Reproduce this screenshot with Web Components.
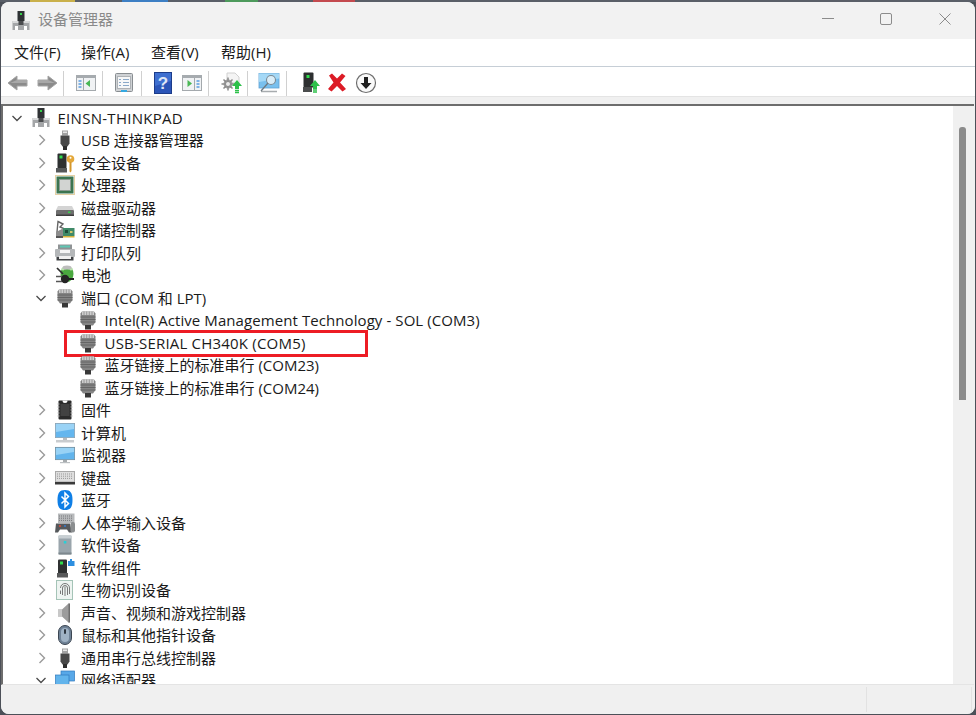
<!DOCTYPE html>
<html lang="zh-CN">
<head>
<meta charset="utf-8">
<title>设备管理器</title>
<style>
    html, body {
        margin: 0;
        height: 715px;
        overflow: hidden;
    }
    body {
        background:
            linear-gradient(90deg, #5a5f68 30px, #c9b04a 30px, #c9b04a 75px, #5a5f68 75px, #5a5f68 122px, #3d7fc4 122px, #3d7fc4 168px, #5a5f68 168px, #5a5f68 225px, #4d9a5c 225px, #4d9a5c 258px, #5a5f68 258px, #5a5f68 313px, #c44a4f 313px, #c44a4f 355px, #5a5f68 355px) 0 0 / 100% 2px no-repeat,
            #4c5058;
        font: 15px/22.5px "Open Sans", "Noto Sans CJK SC", sans-serif;
        color: #1a1a1a;
    }
</style>
</head>
<body>
<device-window>
    <title-bar slot="top" label="设备管理器"></title-bar>
    <menu-bar slot="top"></menu-bar>
    <tool-bar slot="top"></tool-bar>

    <device-tree>
        <tree-row level="0" icon="computer" state="open" style="letter-spacing:.28px">EINSN-THINKPAD</tree-row>
        <tree-row level="1" icon="usb" state="closed">USB 连接器管理器</tree-row>
        <tree-row level="1" icon="security" state="closed">安全设备</tree-row>
        <tree-row level="1" icon="cpu" state="closed">处理器</tree-row>
        <tree-row level="1" icon="disk" state="closed">磁盘驱动器</tree-row>
        <tree-row level="1" icon="storage" state="closed">存储控制器</tree-row>
        <tree-row level="1" icon="printer" state="closed">打印队列</tree-row>
        <tree-row level="1" icon="battery" state="closed">电池</tree-row>
        <tree-row level="1" icon="port" state="open">端口 (COM 和 LPT)</tree-row>
        <tree-row level="2" icon="port" style="letter-spacing:.08px">Intel(R) Active Management Technology - SOL (COM3)</tree-row>
        <tree-row level="2" icon="port" marked style="letter-spacing:.2px">USB-SERIAL CH340K (COM5)</tree-row>
        <tree-row level="2" icon="port">蓝牙链接上的标准串行 (COM23)</tree-row>
        <tree-row level="2" icon="port">蓝牙链接上的标准串行 (COM24)</tree-row>
        <tree-row level="1" icon="firmware" state="closed">固件</tree-row>
        <tree-row level="1" icon="desktop" state="closed">计算机</tree-row>
        <tree-row level="1" icon="monitor" state="closed">监视器</tree-row>
        <tree-row level="1" icon="keyboard" state="closed">键盘</tree-row>
        <tree-row level="1" icon="bluetooth" state="closed">蓝牙</tree-row>
        <tree-row level="1" icon="hid" state="closed">人体学输入设备</tree-row>
        <tree-row level="1" icon="softdev" state="closed">软件设备</tree-row>
        <tree-row level="1" icon="softcomp" state="closed">软件组件</tree-row>
        <tree-row level="1" icon="bio" state="closed">生物识别设备</tree-row>
        <tree-row level="1" icon="sound" state="closed">声音、视频和游戏控制器</tree-row>
        <tree-row level="1" icon="mouse" state="closed">鼠标和其他指针设备</tree-row>
        <tree-row level="1" icon="usb" state="closed">通用串行总线控制器</tree-row>
        <tree-row level="1" icon="network" state="open">网络适配器</tree-row>
    </device-tree>

    <status-bar slot="bottom"></status-bar>
</device-window>

<script>
const ICONS = {
    computer: `<rect x="6.500" y="0" width="7" height="10" fill="#2f3234"/><rect x="9" y="2" width="2" height="2" fill="#35d04a"/><path d="M1.500 10h17v9h-17z" fill="#a4a6a8"/><path d="M1.500 10h17v2h-17z" fill="#d8d9da"/><rect x="4" y="15" width="3" height="4" fill="#fff"/><rect x="13" y="15" width="3" height="4" fill="#fff"/><rect x="7.500" y="10" width="5" height="4" fill="#4a4c4e"/>`,
    usb: `<rect x="7" y="0.500" width="6" height="5" fill="#a2a2a2"/><rect x="8" y="1.500" width="4" height="1.500" fill="#e6e6e6"/><path d="M5.500 5.500h9v8l-2 3h-5l-2-3z" fill="#484848"/><rect x="8" y="16" width="4" height="4" fill="#2e2e2e"/>`,
    security: `<rect x="2.500" y="0.500" width="9" height="15" rx="1" fill="#2d2f30"/><rect x="4.500" y="2.500" width="3" height="3" fill="#2fdc4c"/><path d="M1 15h11v4.500H1z" fill="#565859"/><circle cx="15.500" cy="6" r="3.800" fill="#e4a83a"/><circle cx="15.500" cy="4.800" r="1" fill="#fff"/><path d="M14.500 9h2v9l-1 1.500-1-1z" fill="#d4972c"/>`,
    cpu: `<rect x="0.500" y="0.500" width="19" height="19" fill="none" stroke="#c8a24a" stroke-dasharray="1 1"/><rect x="1.500" y="1.500" width="17" height="17" fill="#3b7550"/><rect x="4.500" y="4.500" width="11" height="11" fill="#d2d4d2" stroke="#8a9a90"/>`,
    disk: `<path d="M3 8h14l2 4H1z" fill="#d4d4d4"/><rect x="1" y="12" width="18" height="5.500" rx="1" fill="#6e6e6e"/><rect x="1" y="16.500" width="18" height="1.500" fill="#3e3e3e"/><rect x="13" y="13.500" width="2.500" height="1.500" fill="#37d24c"/>`,
    storage: `<path d="M3 1.500l5 2.500-3 3 5 2-6 3H2z" fill="none" stroke="#666" stroke-width="1.400"/><path d="M1 12l6-3 3 3v4H1z" fill="#8c8c8c"/><rect x="8" y="8" width="11.500" height="8" fill="#3f8a68"/><rect x="10" y="10" width="3" height="3" fill="#1c4d3a"/><rect x="15" y="11" width="2.500" height="2" fill="#d8c86c"/><rect x="8" y="16" width="11.500" height="1.500" fill="#d6b13d"/><rect x="1" y="16" width="7" height="2" fill="#555"/>`,
    printer: `<rect x="3" y="1.500" width="14" height="5" fill="#8f9395"/><rect x="5" y="2.500" width="10" height="2" fill="#5fc7b4"/><rect x="0" y="6" width="20" height="8" rx="1" fill="#b4b7b9"/><rect x="5" y="7" width="10" height="3" fill="#f4f4f4"/><rect x="1.500" y="14" width="17" height="3.500" fill="#3f4244"/><rect x="4" y="13" width="12" height="3" fill="#f0f0f0"/>`,
    battery: `<ellipse cx="12" cy="9" rx="6.500" ry="8" fill="#4aa83f"/><path d="M7 5c2-3 8-3 10 0" fill="none" stroke="#b7e0ac" stroke-width="2.500"/><ellipse cx="12" cy="2.500" rx="4.500" ry="2" fill="#bdbdbd"/><path d="M2 3l6 6" stroke="#2f2f2f" stroke-width="1.700"/><circle cx="10" cy="14" r="4.200" fill="#242424"/><path d="M1 11.500h6M1 16.500h6" stroke="#555" stroke-width="1.700"/><path d="M13 14h6" stroke="#222" stroke-width="2"/>`,
    port: `<path d="M4 1.500h12l1.500 2V12l-2.500 3.500H5L2.500 12V3.500z" fill="#858585"/><rect x="4" y="1.500" width="12" height="3.500" fill="#cfcfcf"/><path d="M6 1.500V5M8.700 1.500V5M11.300 1.500V5M14 1.500V5" stroke="#8c8c8c" stroke-width=".8"/><path d="M2.500 7h15M2.500 9.500h15M2.500 12h15" stroke="#656565"/><rect x="7" y="15" width="6" height="4.500" fill="#383838"/>`,
    firmware: `<rect x="3.500" y="0.500" width="13" height="19" rx="1" fill="#2b2b2b"/><path d="M7.500 0.500a2.500 2.500 0 0 0 5 0z" fill="#fff"/><path d="M2.500 4h2M2.500 7h2M2.500 10h2M2.500 13h2M2.500 16h2M15.500 4h2M15.500 7h2M15.500 10h2M15.500 13h2M15.500 16h2" stroke="#b5b5b5"/><rect x="5.500" y="4" width="9" height="12" fill="#424242"/>`,
    desktop: `<rect x="0.300" y="0.300" width="19.400" height="14.400" fill="#64b6ee" stroke="#8a9aa4" stroke-width=".6"/><path d="M1 1h18v5L1 9z" fill="#9ad3f6"/><rect x="8" y="15" width="4" height="2" fill="#b8bcbf"/><rect x="1" y="17" width="18" height="2.500" fill="#c9cccf"/>`,
    monitor: `<rect x="0.300" y="2.300" width="19.400" height="12.400" fill="#62b4ec" stroke="#6f8796" stroke-width=".7"/><path d="M1 3h18v4L1 10z" fill="#98d2f5"/><rect x="8" y="15" width="4" height="2" fill="#a6abae"/><rect x="5" y="17" width="10" height="1.200" fill="#bcc0c3"/>`,
    keyboard: `<rect x="0.500" y="3.500" width="19" height="10.500" fill="#dedede" stroke="#a9a9a9"/><path d="M2 6h16M2 8.200h16M2 10.400h16" stroke="#999" stroke-dasharray="1 1"/><rect x="0" y="14" width="20" height="2.500" fill="#3a3a3a"/>`,
    bluetooth: `<path d="M10 0c5.500 0 7.500 3 7.500 10S15.500 20 10 20 2.500 17 2.500 10 4.500 0 10 0z" fill="#0f7fe6"/><path d="M6.500 6.500l7 7L10 17V3l3.500 3.500-7 7" fill="none" stroke="#fff" stroke-width="1.500"/>`,
    hid: `<rect x="3" y="0.500" width="16.500" height="9.500" fill="#b7b9bb"/><path d="M4 3h14M4 5.200h14M4 7.400h14" stroke="#77797b" stroke-dasharray="1 1"/><path d="M1 10.500h14l2 9h-3l-2-3H5l-2 3H0z" fill="#55585b"/><rect x="15.500" y="9" width="4.500" height="10.500" rx="2" fill="#8b8e90"/><circle cx="5" cy="13" r="1.100" fill="#d94b3d"/><circle cx="10" cy="13" r="1.100" fill="#3a79c9"/>`,
    softdev: `<rect x="3.500" y="0.500" width="13" height="19" rx="1" fill="#9aa5ac"/><rect x="3.500" y="0.500" width="13" height="3" fill="#c8cfd3"/><rect x="8.800" y="6" width="2.500" height="2.500" fill="#27d0d8"/><rect x="3.500" y="17.500" width="13" height="2" fill="#7d878d"/>`,
    softcomp: `<rect x="3" y="1.500" width="9" height="14" rx="1" fill="#2f3132"/><rect x="5" y="3.500" width="3" height="3" fill="#2fdc4c"/><path d="M2 15h11v4.500H2z" fill="#58595a"/><path d="M13 3h2V1h2v2h2.500v5H13z" fill="#2e8fe0"/>`,
    bio: `<rect x="1.500" y="0.500" width="16" height="19" fill="#eef4f1" stroke="#a5c4b7"/><path d="M5.500 8a4.500 4.500 0 0 1 9 0v6M7.500 15V8a2.500 2.500 0 0 1 5 0v7M10 6.500V16M5.500 10.500v3.500" fill="none" stroke="#6b6b6b" stroke-width=".9"/>`,
    sound: `<path d="M3 6.500h4l6.500-6h1v19h-1l-6.500-6H3z" fill="#9c9c9c"/><path d="M3 6.500h4v7H3z" fill="#c8c8c8"/><path d="M13.500 .5h1.500v19h-1.500z" fill="#6e6e6e"/>`,
    mouse: `<rect x="3.500" y="0.500" width="13" height="19" rx="6.500" fill="#6f8296" stroke="#3c4652"/><rect x="6" y="3" width="8" height="14" rx="4" fill="#9fb2c4"/><rect x="9" y="4" width="2" height="5" rx="1" fill="#2d3640"/>`,
    network: `<rect x="6" y="1" width="13.500" height="10" fill="#58a8e8" stroke="#2e78bd" stroke-width=".7"/><rect x="0.500" y="5" width="13.500" height="11" fill="#62b4ec" stroke="#2e78bd" stroke-width=".7"/><rect x="4" y="16" width="7" height="2" fill="#9aa0a4"/>`,

    back: `<path d="M1 11l9-7v4h10v6H10v4z" fill="#8b8b8b" stroke="#a4a4a4"/><path d="M10 8h10v3H3z" fill="#a8a8a8"/>`,
    forward: `<path d="M21 11l-9-7v4H2v6h10v4z" fill="#8b8b8b" stroke="#a4a4a4"/><path d="M12 8H2v3h17z" fill="#a8a8a8"/>`,
    panelLeft: `<rect x="1.500" y="3.500" width="19" height="15" fill="#f0f2f4" stroke="#a4a9ad"/><rect x="1" y="3" width="20" height="3" fill="#a6abaf"/><rect x="3.500" y="8" width="3" height="2" fill="#7fb2e6"/><rect x="3.500" y="11" width="3" height="2" fill="#7fb2e6"/><rect x="3.500" y="14" width="3" height="2" fill="#7fb2e6"/><path d="M8.500 6v13" stroke="#a4a9ad"/><path d="M15 8v7l-4.500-3.500z" fill="#49b755"/>`,
    panelRight: `<rect x="1.500" y="3.500" width="19" height="15" fill="#f0f2f4" stroke="#a4a9ad"/><rect x="1" y="3" width="20" height="3" fill="#a6abaf"/><rect x="15.500" y="8" width="3" height="2" fill="#7fb2e6"/><rect x="15.500" y="11" width="3" height="2" fill="#7fb2e6"/><rect x="15.500" y="14" width="3" height="2" fill="#7fb2e6"/><path d="M13.500 6v13" stroke="#a4a9ad"/><path d="M6.500 8v7l4.500-3.500z" fill="#49b755"/>`,
    props: `<rect x="2.500" y="1.500" width="17" height="18" rx="1" fill="#cfd2d5" stroke="#888d91"/><rect x="4.500" y="4.500" width="13" height="12" fill="#f6f7f8" stroke="#aeb2b6"/><path d="M6 7.500h2M10 7.500h6M6 10.500h2M10 10.500h6M6 13.500h2M10 13.500h6" stroke="#8aa8c8"/><rect x="8" y="18" width="6" height="2" fill="#35a8e0"/>`,
    help: `<rect x="2.500" y="0.500" width="17" height="21" fill="#2b55b8" stroke="#1c3c8a"/><path d="M3 1h16v8L3 14z" fill="#3e6fd0"/><text x="11" y="17" text-anchor="middle" font-family="Liberation Sans" font-size="17" font-weight="700" fill="#dfe6f6">?</text>`,
    scan: `<path d="M7 1h8l4 4v6H7z" fill="#f4f4f4" stroke="#d0d0d0"/><circle cx="8" cy="12" r="4.500" fill="#a0a0a0"/><path d="M8 5.500v13M1.500 12h13M3.500 7.500l9 9M12.500 7.500l-9 9" stroke="#8a8a8a" stroke-width="1.500"/><circle cx="8" cy="12" r="2" fill="#ececec"/><path d="M17 8l5 6h-3v3h-4v-3h-3z" fill="#2dc04a"/><path d="M15 18.500h4M15 20.500h4" stroke="#2dc04a" stroke-width="1.300"/>`,
    scanMonitor: `<rect x="1" y="1.500" width="20" height="14.500" fill="#79c0ee" stroke="#5fa2d4" stroke-width=".8"/><path d="M1 1.500h20v5L1 10z" fill="#a4d8f6"/><path d="M3 19.500h16" stroke="#a8acaf" stroke-width="1.500"/><circle cx="13" cy="8" r="4.500" fill="#d9edf8" stroke="#7c8a94" stroke-width="1.100"/><path d="M10 11l-7 8" stroke="#6f7a82" stroke-width="1.400"/>`,
    enable: `<rect x="3.500" y="0.500" width="10" height="15" rx="1" fill="#2d2f30"/><rect x="6.500" y="3" width="3" height="3" fill="#2fdc4c"/><path d="M3 15h9v5H3z" fill="#4a4c4d"/><path d="M15 8l5 6h-3v3h-4v-3h-3z" fill="#2dc04a"/><path d="M13 18h4M13 20h4" stroke="#2dc04a" stroke-width="1.300"/>`,
    remove: `<path d="M3 3.500L6 1.500l5 5 5-5 3.500 2.500-5.500 6.500L20 17l-3.500 2.500L11 14l-5.500 5.500L2 17l5.500-6.500z" fill="#dc1c26"/>`,
    disable: `<circle cx="11" cy="11" r="9.500" fill="#fafafa" stroke="#6e6e6e" stroke-width="1.200"/><path d="M9 5h4v6h3.500L11 17l-5.500-6H9z" fill="#1f1f1f"/>`
};

class TreeIcon extends HTMLElement {
    constructor() {
        super();
        const box = this.getAttribute('box') || '0 0 20 20';
        const size = this.getAttribute('size') || 20;
        const shadowRoot = this.attachShadow({ mode: 'open' });
        shadowRoot.innerHTML = `
            <style>
                :host {
                    display: flex;
                    align-items: center;
                    justify-content: center;
                    flex: none;
                    width: ${size}px;
                    height: ${size}px;
                }
                svg {
                    display: block;
                }
            </style>
            <svg width="${size}" height="${size}" viewBox="${box}">${ICONS[this.getAttribute('name')] || ''}</svg>
        `;
    }
}

class TitleBar extends HTMLElement {
    constructor() {
        super();
        const shadowRoot = this.attachShadow({ mode: 'open' });
        shadowRoot.innerHTML = `
            <style>
                :host {
                    display: flex;
                    align-items: center;
                    height: 37px;
                    padding-left: 10px;
                    background: #f2f2f2;
                    color: #8a8a8a;
                }
                #label {
                    margin: 0 0 3px 7px;
                    flex: 1;
                }
                .control {
                    display: block;
                    flex: none;
                    margin: 0 46px 3px 0;
                }
                #max {
                    margin-right: 47px;
                }
                .control:last-child {
                    margin-right: 24px;
                }
            </style>
            <tree-icon name="computer"></tree-icon>
            <span id="label">${this.getAttribute('label')}</span>
            <svg class="control" width="12" height="12" viewBox="0 0 12 12"><path d="M0 5.500h12" stroke="#8c8c8c"/></svg>
            <svg class="control" id="max" width="12" height="12" viewBox="0 0 12 12"><rect x=".5" y=".5" width="11" height="11" rx="1.500" fill="none" stroke="#8c8c8c"/></svg>
            <svg class="control" width="12" height="12" viewBox="0 0 12 12"><path d="M.5.500l11 11M11.500.500l-11 11" stroke="#8c8c8c"/></svg>
        `;
    }
}

class MenuBar extends HTMLElement {
    constructor() {
        super();
        const shadowRoot = this.attachShadow({ mode: 'open' });
        shadowRoot.innerHTML = `
            <style>
                :host {
                    display: flex;
                    align-items: center;
                    gap: 11px;
                    height: 28px;
                    padding-left: 13px;
                    box-sizing: border-box;
                    background: #fff;
                    border-bottom: 1px solid #c6ced6;
                }
                span {
                    width: 59px;
                    white-space: nowrap;
                }
                span:first-of-type {
                    width: 56px;
                }
            </style>
            <span>文件(F)</span>
            <span>操作(A)</span>
            <span>查看(V)</span>
            <span>帮助(H)</span>
        `;
    }
}

class ToolBar extends HTMLElement {
    constructor() {
        super();
        // name + left margin of every item, "|" is a separator
        const items = [
            ['back', 5], ['forward', 7], ['|', 5],
            ['panelLeft', 11], ['|', 5],
            ['props', 10], ['|', 6],
            ['help', 10], ['panelRight', 7], ['|', 5],
            ['scan', 11], ['|', 5],
            ['scanMonitor', 10], ['|', 6],
            ['enable', 13], ['remove', 4], ['disable', 7]
        ];
        const markup = items.map(([name, left]) => name === '|'
            ? `<i style="margin-left:${left}px"></i>`
            : `<tree-icon name="${name}" size="22" box="0 0 22 22" style="margin-left:${left}px"></tree-icon>`).join('');
        const shadowRoot = this.attachShadow({ mode: 'open' });
        shadowRoot.innerHTML = `
            <style>
                :host {
                    display: flex;
                    align-items: center;
                    height: 30px;
                    padding: 3px 0 0 1px;
                    box-sizing: border-box;
                    background: #fff;
                    border-bottom: 1px solid #e4e4e4;
                }
                i {
                    display: block;
                    flex: none;
                    width: 1px;
                    height: 25px;
                    background: #d0d0d0;
                }
            </style>
            ${markup}
        `;
    }
}

class TreeRow extends HTMLElement {
    constructor() {
        super();
        const level = Number(this.getAttribute('level')) || 0;
        const state = this.getAttribute('state');
        const icon = this.getAttribute('icon');
        let chevron = '';
        if (state === 'open') {
            chevron = '<svg width="12" height="12" viewBox="0 0 12 12"><path d="M1.500 4l4.500 4.500L10.500 4" fill="none" stroke="#4a4a4a" stroke-width="1.300"/></svg>';
        } else if (state === 'closed') {
            chevron = '<svg width="12" height="12" viewBox="0 0 12 12"><path d="M4.500 1L9.500 6l-5 5" fill="none" stroke="#9a9a9a" stroke-width="1.400"/></svg>';
        }
        const shadowRoot = this.attachShadow({ mode: 'open' });
        shadowRoot.innerHTML = `
            <style>
                :host {
                    display: flex;
                    align-items: center;
                    position: relative;
                    height: 22.5px;
                    padding-left: ${1 + level * 23.5}px;
                    white-space: nowrap;
                }
                #chevron {
                    display: flex;
                    align-items: center;
                    justify-content: center;
                    flex: none;
                    width: 26px;
                }
                #icon {
                    display: flex;
                    justify-content: center;
                    flex: none;
                    width: 22px;
                    margin-right: 5.5px;
                }
                #mark {
                    display: ${this.hasAttribute('marked') ? 'block' : 'none'};
                    position: absolute;
                    left: 61px;
                    top: -1.5px;
                    width: 298px;
                    height: 21px;
                    border: 3px solid #ed1c24;
                }
            </style>
            <span id="chevron">${chevron}</span>
            <span id="icon"><tree-icon name="${icon}"></tree-icon></span>
            <slot></slot>
            <div id="mark"></div>
        `;
    }
}

class DeviceTree extends HTMLElement {
    constructor() {
        super();
        const shadowRoot = this.attachShadow({ mode: 'open' });
        shadowRoot.innerHTML = `
            <style>
                :host {
                    display: flex;
                    flex: 1;
                    min-height: 0;
                    margin: 7px 1px 0 0;
                    background: #fff;
                    border-top: 2px solid #6d6d6d;
                    border-left: 2px solid #6d6d6d;
                    border-bottom: 1px solid #e4e4e4;
                }
                #rows {
                    flex: 1;
                    min-width: 0;
                    overflow: hidden;
                    padding-top: 0.500px;
                }
                #scroll {
                    flex: none;
                    width: 21px;
                    background: #f0f0f0;
                }
                #thumb {
                    width: 7px;
                    height: 273px;
                    margin: 21px 0 0 6px;
                    border-radius: 3px 3px 0 0;
                    background: #8b8b8b;
                }
            </style>
            <div id="rows"><slot></slot></div>
            <div id="scroll"><div id="thumb"></div></div>
        `;
    }
}

class StatusBar extends HTMLElement {
    constructor() {
        super();
        const shadowRoot = this.attachShadow({ mode: 'open' });
        shadowRoot.innerHTML = `
            <style>
                :host {
                    display: flex;
                    height: 29px;
                    padding: 2px 3px 2px 0;
                    box-sizing: border-box;
                    background: #f0f0f0;
                }
                div {
                    border-right: 1px solid #e2e2e2;
                }
                #main {
                    width: 865px;
                }
                #side {
                    flex: 1;
                }
            </style>
            <div id="main"></div>
            <div id="side"></div>
        `;
    }
}

class DeviceWindow extends HTMLElement {
    constructor() {
        super();
        const shadowRoot = this.attachShadow({ mode: 'open' });
        shadowRoot.innerHTML = `
            <style>
                :host {
                    display: flex;
                    flex-direction: column;
                    box-sizing: border-box;
                    height: 712px;
                    margin: 2px 1px 1px 1px;
                    background: #f0f0f0;
                    border-radius: 8px;
                    overflow: hidden;
                }
            </style>
            <slot name="top"></slot>
            <slot></slot>
            <slot name="bottom"></slot>
        `;
    }
}

window.customElements.define('tree-icon', TreeIcon);
window.customElements.define('title-bar', TitleBar);
window.customElements.define('menu-bar', MenuBar);
window.customElements.define('tool-bar', ToolBar);
window.customElements.define('tree-row', TreeRow);
window.customElements.define('device-tree', DeviceTree);
window.customElements.define('status-bar', StatusBar);
window.customElements.define('device-window', DeviceWindow);
</script>
</body>
</html>
